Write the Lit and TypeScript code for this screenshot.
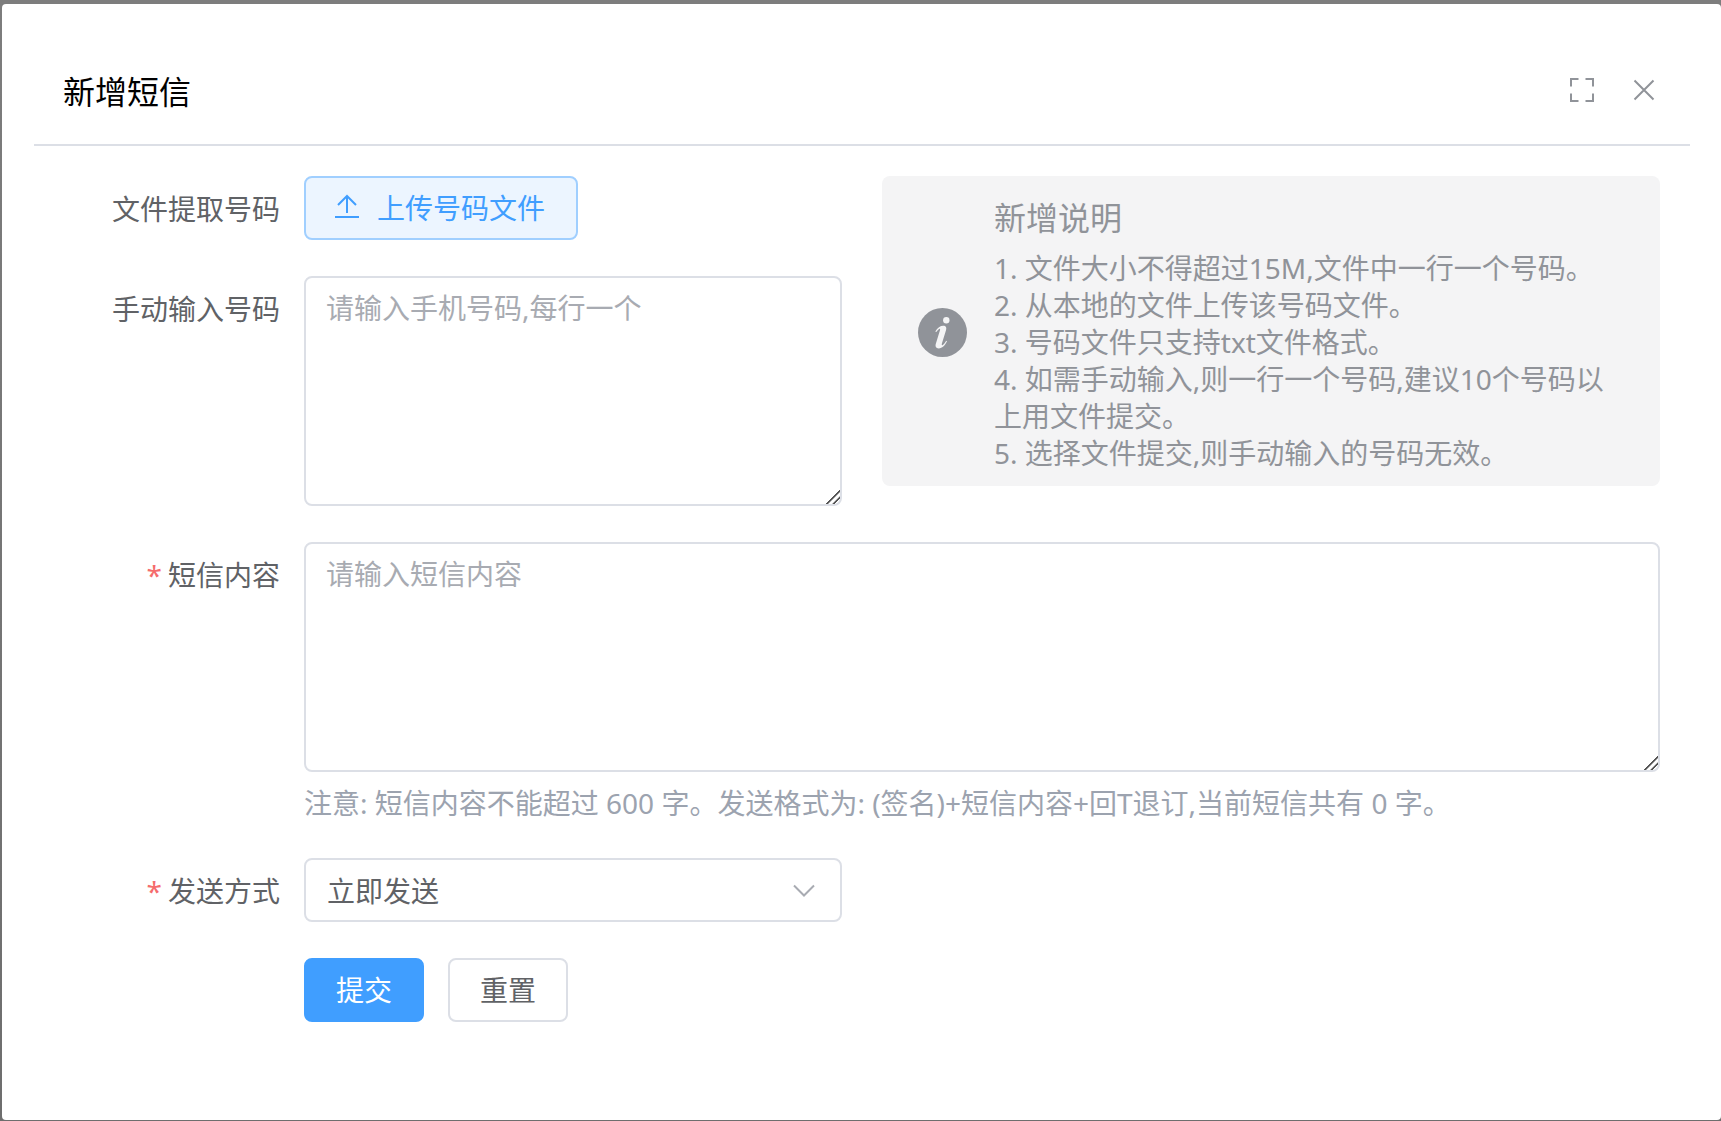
import { LitElement, html, css, svg } from "lit";
import { customElement, state } from "lit/decorators.js";

const uploadIcon = svg`<path d="M0 24H24M12 3V20M3 12L12 3L21 12" />`;

@customElement("app-root")
export class AppRoot extends LitElement {
  static styles = css`
    :host {
      display: block;
      font-family: "Noto Sans", "Noto Sans CJK SC", sans-serif;
      font-size: 28px;
      color: #606266;
    }
    *, *::before, *::after { box-sizing: border-box; }
    .overlay {
      min-height: 100vh;
      display: flex;
      padding: 4px 0 1px 2px;
      background: linear-gradient(#7d7d7d, #6e6e6e);
    }
    .dialog {
      flex: 1;
      min-width: 0;
      background: #fff;
      border-radius: 4px;
    }
    .header {
      display: flex;
      align-items: center;
      justify-content: space-between;
      height: 142px;
      margin: 0 31px 0 32px;
      padding: 36px 32px 0 29px;
      border-bottom: 2px solid #dcdfe6;
    }
    .title {
      margin: 0;
      font-size: 32px;
      font-weight: 400;
      line-height: 48px;
      color: #000;
    }
    .tools { display: flex; gap: 34px; padding-bottom: 4px; }
    .tool {
      display: flex;
      padding: 0;
      border: 0;
      background: none;
      color: #909399;
      cursor: pointer;
    }
    svg { display: block; fill: none; stroke: currentColor; stroke-width: 2; }
    .form {
      display: flex;
      flex-direction: column;
      gap: 36px;
      padding: 30px 61px 60px 60px;
    }
    .split {
      display: grid;
      grid-template-columns: minmax(0, 780fr) minmax(0, 778fr);
      gap: 40px;
      align-items: start;
    }
    .stack { display: flex; flex-direction: column; gap: 36px; }
    .item { display: flex; align-items: flex-start; }
    .label {
      flex: none;
      width: 242px;
      margin-bottom: -2px;
      padding-right: 24px;
      text-align: right;
      line-height: 66px;
      white-space: nowrap;
    }
    .required::before { content: "*"; margin-right: 6px; color: #f56c6c; }
    .content { flex: 1; min-width: 0; }
    .btn {
      display: inline-flex;
      align-items: center;
      justify-content: center;
      gap: 18px;
      height: 64px;
      padding: 0 30px 3px;
      border: 2px solid #dcdfe6;
      border-radius: 8px;
      background: #fff;
      color: #606266;
      font: inherit;
      white-space: nowrap;
      cursor: pointer;
    }
    .plain { padding-left: 29px; padding-right: 31px; border-color: #a0cfff; background: #ecf5ff; color: #409eff; }
    .primary { border-color: #409eff; background: #409eff; color: #fff; }
    .actions { display: flex; gap: 24px; padding-left: 242px; }
    .area {
      display: block;
      width: 100%;
      height: 230px;
      padding: 9px 20px;
      border: 2px solid #dcdfe6;
      border-radius: 8px;
      background: #fff;
      color: #606266;
      font: inherit;
      line-height: 42px;
      resize: vertical;
    }
    .area::placeholder { color: #a8abb2; opacity: 1; }
    .area::-webkit-resizer {
      background: linear-gradient(
        315deg,
        transparent 4px,
        #555 4px,
        #555 5px,
        transparent 6px,
        transparent 8px,
        #555 9px,
        #555 10px,
        transparent 10px
      );
    }
    .note { margin: 12px 0 0; line-height: 38px; color: #9ca3af; }
    .picker { position: relative; }
    .select {
      display: block;
      width: 100%;
      height: 64px;
      padding: 2px 60px 0 21px;
      border: 2px solid #dcdfe6;
      border-radius: 8px;
      background: #fff;
      color: #606266;
      font: inherit;
      appearance: none;
    }
    .arrow {
      position: absolute;
      right: 24px;
      top: 20px;
      color: #a8abb2;
      pointer-events: none;
    }
    .tip {
      display: flex;
      align-items: center;
      gap: 27px;
      padding: 16px 32px 14px 36px;
      border-radius: 8px;
      background: #f4f4f5;
      color: #909399;
    }
    .badge { flex: none; stroke: none; }
    .tip-title { margin: 0 0 6px; font-size: 32px; font-weight: 400; line-height: 52px; }
    .tip-line { margin: 0; line-height: 37px; }
  `;

  @state() private message = "";

  private onMessage(e: Event) {
    this.message = (e.target as HTMLTextAreaElement).value;
  }

  private onReset() {
    this.message = "";
  }

  private tips = [
    "1. 文件大小不得超过15M,文件中一行一个号码。",
    "2. 从本地的文件上传该号码文件。",
    "3. 号码文件只支持txt文件格式。",
    "4. 如需手动输入,则一行一个号码,建议10个号码以上用文件提交。",
    "5. 选择文件提交,则手动输入的号码无效。",
  ];

  render() {
    return html`
      <div class="overlay">
        <section class="dialog" role="dialog" aria-labelledby="title">
          <header class="header">
            <h1 class="title" id="title">新增短信</h1>
            <div class="tools">
              <button class="tool" type="button" aria-label="全屏">
                <svg width="28" height="28" viewBox="0 0 28 28">
                  <path d="M10.500 3H3V10.500M17.500 3H25V10.500M3 17.500V25H10.500M25 17.500V25H17.500" />
                </svg>
              </button>
              <button class="tool" type="button" aria-label="关闭">
                <svg width="28" height="28" viewBox="0 0 28 28">
                  <path d="M4.500 4.500L23.500 23.500M23.500 4.500L4.500 23.500" />
                </svg>
              </button>
            </div>
          </header>

          <form class="form" @reset=${this.onReset} @submit=${(e: Event) => e.preventDefault()}>
            <div class="split">
              <div class="stack">
                <div class="item">
                  <label class="label" for="upload">文件提取号码</label>
                  <button class="btn plain" id="upload" type="button">
                    <svg width="24" height="28" viewBox="0 0 24 28">${uploadIcon}</svg>
                    <span>上传号码文件</span>
                  </button>
                </div>
                <div class="item">
                  <label class="label" for="numbers">手动输入号码</label>
                  <div class="content">
                    <textarea class="area" id="numbers" placeholder="请输入手机号码,每行一个"></textarea>
                  </div>
                </div>
              </div>
              <aside class="tip">
                <svg class="badge" width="49" height="49" viewBox="0 0 49 49">
                  <circle cx="24.500" cy="24.500" r="24.500" fill="#909399" />
                  <circle cx="28.300" cy="12.300" r="3.200" fill="#f4f4f5" />
                  <path
                    fill="#f4f4f5"
                    d="M17.300 23.600C19.500 19.600 22.300 17.800 25.200 17.800C28 17.800 28.800 19.600 28 22.300L23.900 35.500C23.500 36.900 23.900 37.500 24.800 37C26 36.300 27.200 34.700 28.200 32.800L29 33.300C26.900 37.800 24.100 40.400 20.800 40.400C17.900 40.400 17 38.500 17.900 35.600L21.900 22.500C22.300 21.200 22 20.500 21.200 20.900C20.200 21.400 19.200 22.600 18.200 24.100Z"
                  />
                </svg>
                <div>
                  <h2 class="tip-title">新增说明</h2>
                  ${this.tips.map((t) => html`<p class="tip-line">${t}</p>`)}
                </div>
              </aside>
            </div>

            <div class="item">
              <label class="label required" for="message">短信内容</label>
              <div class="content">
                <textarea
                  class="area"
                  id="message"
                  placeholder="请输入短信内容"
                  @input=${this.onMessage}
                ></textarea>
                <p class="note">注意: 短信内容不能超过 600 字。发送格式为: (签名)+短信内容+回T退订,当前短信共有 ${this.message.length} 字。</p>
              </div>
            </div>

            <div class="split">
              <div class="item">
                <label class="label required" for="mode">发送方式</label>
                <div class="content picker">
                  <select class="select" id="mode">
                    <option>立即发送</option>
                  </select>
                  <svg class="arrow" width="28" height="24" viewBox="0 0 28 24">
                    <path d="M4 7.500L14 17.500L24 7.500" />
                  </svg>
                </div>
              </div>
            </div>

            <div class="actions">
              <button class="btn primary" type="submit">提交</button>
              <button class="btn" type="reset">重置</button>
            </div>
          </form>
        </section>
      </div>
    `;
  }
}
